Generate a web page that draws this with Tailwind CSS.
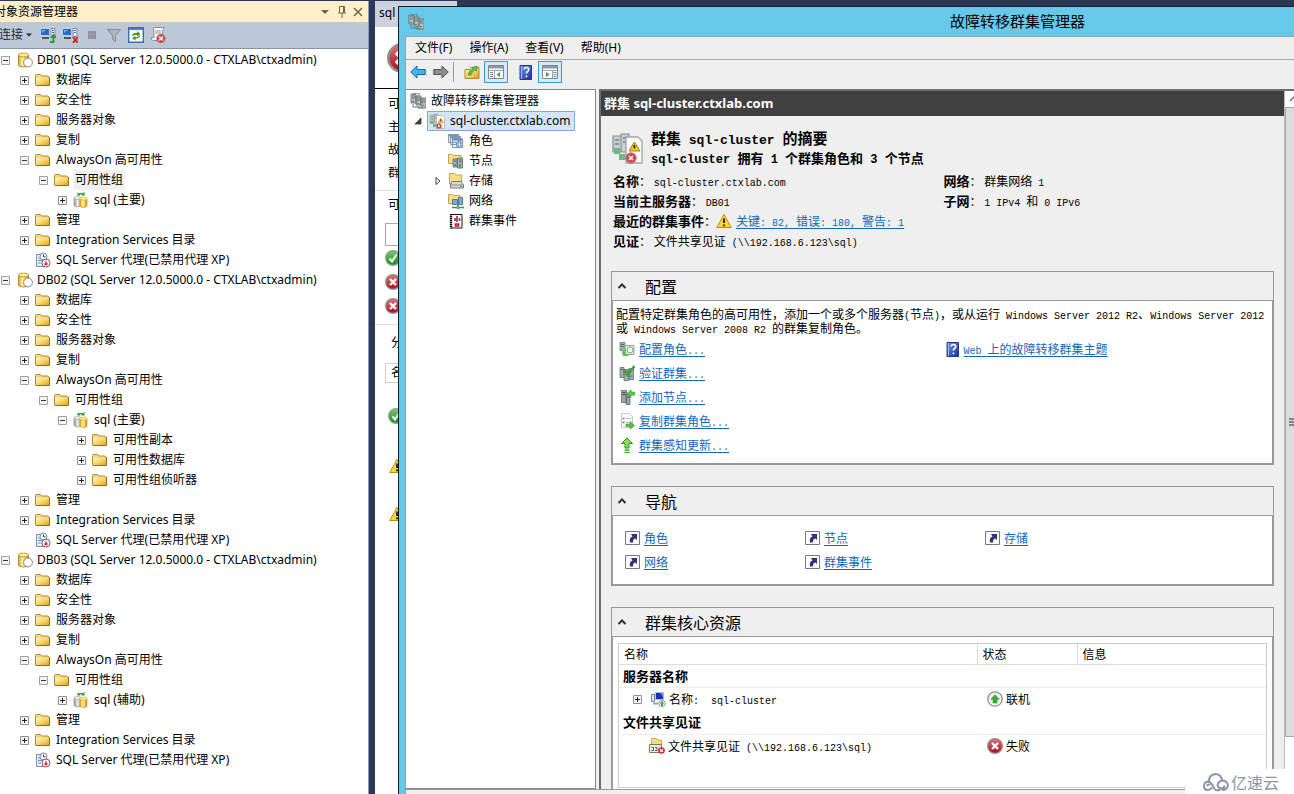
<!DOCTYPE html>
<html lang="zh-CN">
<head>
<meta charset="utf-8">
<title>故障转移群集管理器</title>
<script src="https://cdn.jsdelivr.net/npm/@tailwindcss/browser@4"></script>
</head>
<body class="h-screen overflow-hidden bg-[#293955] font-['Noto_Sans','Noto_Sans_CJK_SC',sans-serif] text-xs text-black">

<svg class="absolute h-0 w-0" aria-hidden="true">
  <defs>
    <linearGradient id="gold" x1="0" y1="0" x2="1" y2="1"><stop offset="0" stop-color="#fff6c4"/><stop offset=".5" stop-color="#f6d567"/><stop offset="1" stop-color="#dc9c1c"/></linearGradient>
    <linearGradient id="cyl" x1="0" x2="1"><stop offset="0" stop-color="#d9a520"/><stop offset=".4" stop-color="#fff3a8"/><stop offset="1" stop-color="#d08c10"/></linearGradient>
    <linearGradient id="greyCyl" x1="0" x2="1"><stop offset="0" stop-color="#8d8d8d"/><stop offset=".5" stop-color="#eee"/><stop offset="1" stop-color="#999"/></linearGradient>
    <linearGradient id="red" x1="0" y1="0" x2="0" y2="1"><stop offset="0" stop-color="#e8707a"/><stop offset="1" stop-color="#a80c18"/></linearGradient>
    <linearGradient id="green" x1="0" y1="0" x2="0" y2="1"><stop offset="0" stop-color="#79cf6c"/><stop offset="1" stop-color="#16831a"/></linearGradient>
    <linearGradient id="blue" x1="0" y1="0" x2="1" y2="1"><stop offset="0" stop-color="#6f93ea"/><stop offset="1" stop-color="#1b2fa0"/></linearGradient>
    <symbol id="plus" viewBox="0 0 9 9"><path d="M.5.5h8v8h-8z" fill="#f4f4f4" stroke="#919191"/><path d="M2 4.500h5M4.500 2v5" stroke="#222"/></symbol>
    <symbol id="minus" viewBox="0 0 9 9"><path d="M.5.5h8v8h-8z" fill="#f4f4f4" stroke="#a0a0a0"/><path d="M2 4.500h5" stroke="#334"/></symbol>
    <symbol id="folder" viewBox="0 0 16 16"><path d="M.5 13V3.500q0-1 1-1h4l1.500 1.500h5.500q1 0 1 1V13z" fill="#f3d77a" stroke="#b08a35"/><path d="M1 13.500V5.500h13.500V13.500z" fill="url(#gold)"/><path d="M1 13.500h13.500V5" fill="none" stroke="#96700f"/></symbol>
    <symbol id="db" viewBox="0 0 16 16"><path d="M1.500 3v10q0 2 5 2t5-2V3z" fill="url(#cyl)" stroke="#a77a18" stroke-width=".8"/><ellipse cx="6.500" cy="3" rx="5" ry="2" fill="#fff0a0" stroke="#b08420" stroke-width=".8"/><circle cx="11" cy="10.500" r="4.400" fill="#fff" stroke="#888"/></symbol>
    <symbol id="ag" viewBox="0 0 16 16"><path d="M1 6v7q0 2 3.500 2T8 13V6z" fill="url(#greyCyl)" stroke="#999" stroke-width=".7"/><ellipse cx="4.500" cy="6" rx="3.500" ry="1.500" fill="#eee" stroke="#999" stroke-width=".6"/><path d="M7 6.500v7q0 2 3.500 2t3.500-2v-7z" fill="url(#cyl)" stroke="#d79b17" stroke-width=".7"/><ellipse cx="10.500" cy="6.500" rx="3.500" ry="1.500" fill="#fff4a0" stroke="#d8a020" stroke-width=".6"/><path d="M5 3q3-3 6 0M11 .3V3H8.500M5 .8V3h2" fill="none" stroke="#2c9a38" stroke-width="1.200"/></symbol>
    <symbol id="agent" viewBox="0 0 16 16"><path d="M1.500 2.500h7v12h-7z" fill="#e8eef8" stroke="#7b8fb0"/><path d="M3 6h4M3 8.500h4M3 11h3" stroke="#6d8ec4"/><circle cx="8.500" cy="4.500" r="3.500" fill="#fff" stroke="#6a86b0"/><path d="M8.500 2.500v2.300h2" fill="none" stroke="#333"/><circle cx="11" cy="11" r="4" fill="#fff" stroke="#a5485c"/><path d="M11 9v4M9.500 11.500L11 13l1.500-1.500" fill="none" stroke="#c02030" stroke-width="1.200"/></symbol>
    <symbol id="conn" viewBox="0 0 16 16"><path d="M.5 1.500h9v7h-9z" fill="#2467d6" stroke="#c5d4ee"/><path d="M2 3h4L2 6z" fill="#6fa8f5"/><path d="M2 11h7" stroke="#555" stroke-width="2"/><path d="M11 1.500h4v8h-4z" fill="#e9eef5" stroke="#8090a5"/><path d="M12 3.500h2M12 5.500h2" stroke="#667"/></symbol>
    <symbol id="srv" viewBox="0 0 16 16"><path d="M1 1h5v9H1zM6 3h5v9H6zM11 5h5v10h-5z" fill="#b9bfc2" stroke="#5d6468" stroke-width=".8"/><path d="M2 3h3M2 5h3M7 5h3M7 7h3M12 7h3M12 9h3" stroke="#566" stroke-width=".9"/><path d="M4 0h5M4 0v2M9 0v3M3 11v3h7M8 13v2h5" stroke="#777" fill="none"/><path d="M2 8h2v1H2zM7 10h2v1H7zM12 12h2v1h-2z" fill="#3f9d56"/></symbol>
    <symbol id="warn" viewBox="0 0 16 16"><path d="M8 1.500L15.300 14.500H.7z" fill="#fbd62e" stroke="#b98e17" stroke-linejoin="round"/><path d="M8 5.500v4.500M8 11.500v1.700" stroke="#2b2300" stroke-width="1.900"/></symbol>
    <symbol id="err" viewBox="0 0 16 16"><circle cx="8" cy="8" r="7.300" fill="url(#red)" stroke="#8f8f8f" stroke-width="1.400"/><path d="M5 5l6 6M11 5l-6 6" stroke="#fff" stroke-width="2.400"/></symbol>
    <symbol id="ok" viewBox="0 0 16 16"><circle cx="8" cy="8" r="7.300" fill="url(#green)" stroke="#8f9f8f" stroke-width="1.400"/><path d="M4.500 8.500l2.500 3 4.500-7" fill="none" stroke="#fff" stroke-width="2"/></symbol>
    <symbol id="cluster" viewBox="0 0 16 16"><path d="M1 2h4v8H1zM5 1h4v9H5z" fill="#c9ced0" stroke="#8a9195" stroke-width=".6"/><path d="M2 4h2M6 3h2M2 6h2M6 5h2" stroke="#788" stroke-width=".8"/><path d="M1.500 8h3v3h-3zM4 11h3v3H4z" fill="#6fb585"/><path d="M7.500 2.500h6l2 2v11h-8z" fill="#fff" stroke="#a5a5a5" stroke-width=".7"/><path d="M11.700 5l2.800 4.500H9z" fill="#f3cd22" stroke="#98811a" stroke-width=".5"/><path d="M11.700 6.500v1.700" stroke="#222" stroke-width=".9"/><circle cx="10" cy="13" r="2.600" fill="#d7414b" stroke="#b7808a" stroke-width=".6"/><path d="M9 12l2 2M11 12l-2 2" stroke="#fff" stroke-width=".8"/></symbol>
    <symbol id="roles" viewBox="0 0 16 16"><path d="M.5 1.500h10v8H.5zM2.500 3.500h10v8h-10zM4.500 5.500h10v9h-10z" fill="#edf2f8" stroke="#8596aa"/><path d="M1 2h9v1.500H1zM3 4h9v1.500H3zM5 6h9v1.800H5z" fill="#7195c2"/><circle cx="11.500" cy="11.500" r="3" fill="#b9d1ec" stroke="#5f87b8" stroke-width="1.300" stroke-dasharray="1.500 .8"/><circle cx="11.500" cy="11.500" r="1.200" fill="#fff" stroke="#5f87b8" stroke-width=".7"/></symbol>
    <symbol id="nodes" viewBox="0 0 16 16"><path d="M.5 1.500h4l1 1H13v8H.5z" fill="#f7df8e" stroke="#c9a747"/><path d="M5 6h4v8H5zM9.500 5h5v10h-5z" fill="#a9b6bb" stroke="#5c6e74" stroke-width=".9"/><path d="M6 8h2M11 7h2.500M11 9h2.500" stroke="#466"/><path d="M6 11h2v2H6zM11 11h2v3h-2z" fill="#35a45a"/></symbol>
    <symbol id="disk" viewBox="0 0 16 16"><path d="M1.500.5h5l1 1.500h6v9h-12z" fill="#f7df8e" stroke="#c9a747"/><path d="M4 8.500h9l2.500 3.500v3h-13v-3z" fill="#d8dadd" stroke="#777"/><path d="M2.500 12h13" stroke="#888"/><path d="M12 13.500h2" stroke="#35a434"/></symbol>
    <symbol id="net" viewBox="0 0 16 16"><path d="M.5 1.500h4l1 1H12v8H.5z" fill="#f7df8e" stroke="#c9a747"/><path d="M4.500 6.500h5v5h-5zM10.500 4.500h4v7h-4z" fill="#78a9dd" stroke="#56738f"/><path d="M10 11v3M4 14.500h12" stroke="#3f8f5d" stroke-width="1.600"/><path d="M8.500 13h3v3h-3z" fill="#5cb477"/></symbol>
    <symbol id="events" viewBox="0 0 16 16"><path d="M3 1.500h11v13.500H3z" fill="#fff" stroke="#111"/><path d="M3 1v14.500" stroke="#111" stroke-width="2.400" stroke-dasharray="1 1"/><path d="M9 3v6M7.500 11h3v2h-3z" stroke="#c01a24" stroke-width="1.600" fill="none"/><path d="M6 5h2v3H6zM10.500 5h2v3h-2z" fill="#6c62a8"/></symbol>
    <symbol id="book" viewBox="0 0 16 16"><path d="M2 1.500h11.500v14H2z" fill="url(#blue)" stroke="#24358d"/><path d="M3.500 2v13" stroke="#a9bdf5"/><path d="M6.300 5.500q0-2 2.200-2t2.200 2q0 1.200-1.200 2t-1 2.200M8.500 11.500v1.800" fill="none" stroke="#fff" stroke-width="1.600"/></symbol>
    <symbol id="pane" viewBox="0 0 16 16"><path d="M.5 1.500h15v13H.5z" fill="#fff" stroke="#7d8791"/><path d="M1 2h14v2.500H1z" fill="#8e99a5"/><path d="M1 6.500h14M6.500 6.500V14" stroke="#9aa4ae"/><path d="M2 8.500h3M2 10.500h3M2 12.500h3" stroke="#6d87a5"/><path d="M12 8v5L8.500 10.500z" fill="#3f9a3a"/></symbol>
    <symbol id="paneR" viewBox="0 0 16 16"><path d="M.5 1.500h15v13H.5z" fill="#fff" stroke="#7d8791"/><path d="M1 2h14v2.500H1z" fill="#8e99a5"/><path d="M1 6.500h14M10.500 6.500V14" stroke="#9aa4ae"/><path d="M11.500 8.500h3M11.500 10.500h3M11.500 12.500h3" stroke="#6d87a5"/><path d="M4 8v5l3.500-2.500z" fill="#3f9a3a"/></symbol>
    <symbol id="cfg" viewBox="0 0 16 16"><path d="M1 1.500h5v8H1z" fill="#a5b2ac" stroke="#6c7a74" stroke-width=".8"/><path d="M2 3.500h3M2 5.500h3" stroke="#566"/><path d="M6 4.500h9v9H6z" fill="#dfeee2" stroke="#93a39a"/><path d="M3 7.500h4v5H3z" fill="#6ec968"/><circle cx="11" cy="9" r="3" fill="#eef6ee" stroke="#8aa58f"/><path d="M3 9.500l7 5.500H4z" fill="#58bd4d"/></symbol>
    <symbol id="validate" viewBox="0 0 16 16"><path d="M1 2.500h4v10H1zM5 4.500h5v11H5zM10 3.500h4.500v11H10z" fill="#a6adb0" stroke="#687175" stroke-width=".8"/><path d="M2 4.500h2M6 6.500h3M6 8.500h3M11 11h2.500" stroke="#566"/><path d="M5 5l3.500 5L15.500 1" fill="none" stroke="#3aa23a" stroke-width="2.600"/></symbol>
    <symbol id="addnode" viewBox="0 0 16 16"><path d="M2.500 1.500h5v12h-5zM7 5.500h4v10H7z" fill="#9fa6a8" stroke="#60696c" stroke-width=".8"/><path d="M3.500 3.500h3M3.500 5.500h3M8 8h2" stroke="#444"/><path d="M8 4.500L12 .8v2.300h3.500v3H12v2.300z" fill="#5fcb45" stroke="#329a2c" stroke-width=".7"/></symbol>
    <symbol id="copy" viewBox="0 0 16 16"><path d="M2.500.5h8l3 3v11h-11z" fill="#fbfbfb" stroke="#c5c9cc"/><path d="M3.500 5.500h2M3.500 9.500h2" stroke="#5683b5" stroke-width="1.500"/><path d="M7 5.500h5M7 9.500h3" stroke="#b5bcc2"/><path d="M7 11h4V8.500l4.500 4-4.500 3.500v-2.500H7z" fill="#55c044" stroke="#3a9b31" stroke-width=".6"/></symbol>
    <symbol id="up" viewBox="0 0 16 16"><path d="M8 1l5.500 5.500H10V11H6V6.500H2.500z" fill="#8ade55" stroke="#2f9122"/><path d="M5.500 13h5M5.500 15.300h5" stroke="#46a62c" stroke-width="1.300"/></symbol>
    <symbol id="shortcut" viewBox="0 0 16 16"><path d="M.5 1.500h14v13H.5z" fill="#fcfcff" stroke="#77787f"/><path d="M5 12.500q-1-5 2.500-6L6 4h6v6l-1.700-1.500q-2.500.5-2.300 4z" fill="#33307e"/></symbol>
    <symbol id="pc" viewBox="0 0 16 16"><path d="M1.500 3.500h3v7h-3z" fill="#dde3ea" stroke="#7c8691"/><path d="M5.500 1.500h8v7h-8z" fill="#1732b5" stroke="#b5bdc8"/><path d="M10 2h3v4z" fill="#5d86f0"/><path d="M3 12.500h8" stroke="#9aa3ab" stroke-width="2"/><circle cx="12" cy="12.500" r="3.300" fill="#eef3ee" stroke="#9aa"/><path d="M12 10l2.300 2.500H13V15h-2v-2.500H9.700z" fill="#39ad39"/></symbol>
    <symbol id="share" viewBox="0 0 16 16"><path d="M2.500.5h5l1 1.500h4v7h-10z" fill="#f8df74" stroke="#d3ae3c"/><path d="M.5 6.500h12v8H.5z" fill="#e8ecd8" stroke="#7a7d5c"/><path d="M2.500 9.500h2v3h-2M6 9.500h2v3H6" stroke="#3f6a74" fill="none"/><circle cx="12.500" cy="12.500" r="3.300" fill="#d0202c"/><path d="M11 11l3 3M14 11l-3 3" stroke="#fff" stroke-width="1.200"/></symbol>
    <symbol id="online" viewBox="0 0 16 16"><circle cx="8" cy="8" r="7.200" fill="#f1f3f1" stroke="#8d9190" stroke-width="1.300"/><path d="M8 3.800l4.300 4.400H10V12H6V8.200H3.700z" fill="#3aac35" stroke="#268023" stroke-width=".5"/></symbol>
    <symbol id="chev" viewBox="0 0 10 8"><path d="M1.500 6L5 2.500 8.500 6" fill="none" stroke="#333" stroke-width="2"/></symbol>
  </defs>
</svg>

<div class="flex h-full">

  <!-- Object explorer -->
  <aside class="mt-px flex w-[369px] shrink-0 flex-col overflow-hidden border-r border-[#8e9bbc] bg-white">
    <header class="flex h-[21px] shrink-0 items-center bg-[#fff0cb] pr-0.5">
      <h2 class="-ml-1.5 flex-1 whitespace-nowrap">对象资源管理器</h2>
      <button aria-label="菜单" class="flex w-4 justify-center"><svg class="h-2 w-2" viewBox="0 0 8 8"><path d="M0 2h8L4 6z" fill="#75633d"/></svg></button>
      <button aria-label="固定" class="flex w-[17px] justify-center"><svg class="h-3 w-3" viewBox="0 0 12 12"><path d="M3.500 6.500v-6h5v6M2 7h8M6 7v5M7.500 1v6" fill="none" stroke="#75633d"/></svg></button>
      <button aria-label="关闭" class="flex w-4 justify-center"><svg class="h-2.5 w-2.5" viewBox="0 0 10 10"><path d="M1 1l8 8M9 1l-8 8" stroke="#75633d" stroke-width="1.500"/></svg></button>
    </header>
    <div class="flex h-[27px] shrink-0 items-center gap-[6px] border-b border-[#8a94a6] bg-[#bcc7d8] text-[#1b293e]">
      <button class="-ml-px flex items-center gap-[3px] whitespace-nowrap">连接<svg class="h-1.5 w-1.5" viewBox="0 0 6 6"><path d="M0 1.500h6L3 4.500z" fill="#1b293e"/></svg></button>
      <button aria-label="连接对象资源管理器" class="ml-0.5"><svg class="h-4 w-4" viewBox="0 0 16 16"><use href="#conn"/><path d="M10 15h3.500V9M11 11l2.500-3 2.500 3" fill="none" stroke="#2c9628" stroke-width="1.800"/></svg></button>
      <button aria-label="断开连接"><svg class="h-4 w-4" viewBox="0 0 16 16"><use href="#conn"/><path d="M11 10l5 6M16 10l-5 6" stroke="#d8242a" stroke-width="2"/></svg></button>
      <button aria-label="停止"><svg class="h-4 w-4" viewBox="0 0 16 16"><path d="M4 4h8v8H4z" fill="#8b8f99"/><path d="M6 4v8M9 4v8M4 7h8" stroke="#9da2ad"/></svg></button>
      <button aria-label="筛选器"><svg class="h-4 w-4" viewBox="0 0 16 16"><path d="M1.500 2.500h13l-5 6v6l-3-2V8.500z" fill="#aeb3bc" stroke="#868b95"/></svg></button>
      <button aria-label="刷新"><svg class="h-4 w-4" viewBox="0 0 16 16"><path d="M.7.700h14.600v14.600H.7z" fill="#fff" stroke="#326fb4" stroke-width="1.400"/><path d="M1 1h14v2H1z" fill="#3d7fc8"/><path d="M4 9q0-3 4-3h1V4l3.500 3L9 9.500V8H7L4 9zM12 8.500q0 3-4 3H7.500v2L4 11l3.500-2v1.300H9z" fill="#48951f"/></svg></button>
      <button aria-label="活动监视器"><svg class="h-4 w-4" viewBox="0 0 16 16"><path d="M3.500.5h11l-2 3v10h-9q-3 0-2.500-3h3z" fill="#f6f6f8" stroke="#888e9a"/><path d="M5 4h6M5 6h6" stroke="#99a"/><circle cx="11" cy="11.500" r="4.200" fill="#d9444b" stroke="#aa5b60" stroke-width=".7"/><path d="M9 9.500l4 4M13 9.500l-4 4" stroke="#fff" stroke-width="1.400"/></svg></button>
    </div>

    <ul class="mt-px whitespace-nowrap leading-5">
      <li>
        <div class="flex h-5 items-center pl-px"><button aria-label="折叠" class="mr-[7px]"><svg class="h-[9px] w-[9px]"><use href="#minus"/></svg></button><svg class="mr-1 h-4 w-4"><use href="#db"/></svg>DB01 (SQL Server 12.0.5000.0 - CTXLAB\ctxadmin)</div>
        <ul class="pl-5">
          <li class="flex h-5 items-center"><button aria-label="展开" class="mr-1.5"><svg class="h-[9px] w-[9px]"><use href="#plus"/></svg></button><svg class="mr-[5px] h-4 w-4"><use href="#folder"/></svg>数据库</li>
          <li class="flex h-5 items-center"><button aria-label="展开" class="mr-1.5"><svg class="h-[9px] w-[9px]"><use href="#plus"/></svg></button><svg class="mr-[5px] h-4 w-4"><use href="#folder"/></svg>安全性</li>
          <li class="flex h-5 items-center"><button aria-label="展开" class="mr-1.5"><svg class="h-[9px] w-[9px]"><use href="#plus"/></svg></button><svg class="mr-[5px] h-4 w-4"><use href="#folder"/></svg>服务器对象</li>
          <li class="flex h-5 items-center"><button aria-label="展开" class="mr-1.5"><svg class="h-[9px] w-[9px]"><use href="#plus"/></svg></button><svg class="mr-[5px] h-4 w-4"><use href="#folder"/></svg>复制</li>
          <li>
            <div class="flex h-5 items-center"><button aria-label="折叠" class="mr-1.5"><svg class="h-[9px] w-[9px]"><use href="#minus"/></svg></button><svg class="mr-[5px] h-4 w-4"><use href="#folder"/></svg>AlwaysOn 高可用性</div>
            <ul class="pl-[19px]">
              <li>
                <div class="flex h-5 items-center"><button aria-label="折叠" class="mr-1.5"><svg class="h-[9px] w-[9px]"><use href="#minus"/></svg></button><svg class="mr-[3px] h-4 w-4"><use href="#folder"/></svg><span class="bg-[#f0f0f0] px-0.5">可用性组</span></div>
                <ul class="pl-[19px]">
                  <li class="flex h-5 items-center"><button aria-label="展开" class="mr-1.5"><svg class="h-[9px] w-[9px]"><use href="#plus"/></svg></button><svg class="mr-[5px] h-4 w-4"><use href="#ag"/></svg>sql (主要)</li>
                </ul>
              </li>
            </ul>
          </li>
          <li class="flex h-5 items-center"><button aria-label="展开" class="mr-1.5"><svg class="h-[9px] w-[9px]"><use href="#plus"/></svg></button><svg class="mr-[5px] h-4 w-4"><use href="#folder"/></svg>管理</li>
          <li class="flex h-5 items-center"><button aria-label="展开" class="mr-1.5"><svg class="h-[9px] w-[9px]"><use href="#plus"/></svg></button><svg class="mr-[5px] h-4 w-4"><use href="#folder"/></svg>Integration Services 目录</li>
          <li class="flex h-5 items-center pl-[15px]"><svg class="mr-[5px] h-4 w-4"><use href="#agent"/></svg>SQL Server 代理(已禁用代理 XP)</li>
        </ul>
      </li>
      <li>
        <div class="flex h-5 items-center pl-px"><button aria-label="折叠" class="mr-[7px]"><svg class="h-[9px] w-[9px]"><use href="#minus"/></svg></button><svg class="mr-1 h-4 w-4"><use href="#db"/></svg>DB02 (SQL Server 12.0.5000.0 - CTXLAB\ctxadmin)</div>
        <ul class="pl-5">
          <li class="flex h-5 items-center"><button aria-label="展开" class="mr-1.5"><svg class="h-[9px] w-[9px]"><use href="#plus"/></svg></button><svg class="mr-[5px] h-4 w-4"><use href="#folder"/></svg>数据库</li>
          <li class="flex h-5 items-center"><button aria-label="展开" class="mr-1.5"><svg class="h-[9px] w-[9px]"><use href="#plus"/></svg></button><svg class="mr-[5px] h-4 w-4"><use href="#folder"/></svg>安全性</li>
          <li class="flex h-5 items-center"><button aria-label="展开" class="mr-1.5"><svg class="h-[9px] w-[9px]"><use href="#plus"/></svg></button><svg class="mr-[5px] h-4 w-4"><use href="#folder"/></svg>服务器对象</li>
          <li class="flex h-5 items-center"><button aria-label="展开" class="mr-1.5"><svg class="h-[9px] w-[9px]"><use href="#plus"/></svg></button><svg class="mr-[5px] h-4 w-4"><use href="#folder"/></svg>复制</li>
          <li>
            <div class="flex h-5 items-center"><button aria-label="折叠" class="mr-1.5"><svg class="h-[9px] w-[9px]"><use href="#minus"/></svg></button><svg class="mr-[5px] h-4 w-4"><use href="#folder"/></svg>AlwaysOn 高可用性</div>
            <ul class="pl-[19px]">
              <li>
                <div class="flex h-5 items-center"><button aria-label="折叠" class="mr-1.5"><svg class="h-[9px] w-[9px]"><use href="#minus"/></svg></button><svg class="mr-[5px] h-4 w-4"><use href="#folder"/></svg>可用性组</div>
                <ul class="pl-[19px]">
                  <li>
                    <div class="flex h-5 items-center"><button aria-label="折叠" class="mr-1.5"><svg class="h-[9px] w-[9px]"><use href="#minus"/></svg></button><svg class="mr-[5px] h-4 w-4"><use href="#ag"/></svg>sql (主要)</div>
                    <ul class="pl-[19px]">
                      <li class="flex h-5 items-center"><button aria-label="展开" class="mr-1.5"><svg class="h-[9px] w-[9px]"><use href="#plus"/></svg></button><svg class="mr-[5px] h-4 w-4"><use href="#folder"/></svg>可用性副本</li>
                      <li class="flex h-5 items-center"><button aria-label="展开" class="mr-1.5"><svg class="h-[9px] w-[9px]"><use href="#plus"/></svg></button><svg class="mr-[5px] h-4 w-4"><use href="#folder"/></svg>可用性数据库</li>
                      <li class="flex h-5 items-center"><button aria-label="展开" class="mr-1.5"><svg class="h-[9px] w-[9px]"><use href="#plus"/></svg></button><svg class="mr-[5px] h-4 w-4"><use href="#folder"/></svg>可用性组侦听器</li>
                    </ul>
                  </li>
                </ul>
              </li>
            </ul>
          </li>
          <li class="flex h-5 items-center"><button aria-label="展开" class="mr-1.5"><svg class="h-[9px] w-[9px]"><use href="#plus"/></svg></button><svg class="mr-[5px] h-4 w-4"><use href="#folder"/></svg>管理</li>
          <li class="flex h-5 items-center"><button aria-label="展开" class="mr-1.5"><svg class="h-[9px] w-[9px]"><use href="#plus"/></svg></button><svg class="mr-[5px] h-4 w-4"><use href="#folder"/></svg>Integration Services 目录</li>
          <li class="flex h-5 items-center pl-[15px]"><svg class="mr-[5px] h-4 w-4"><use href="#agent"/></svg>SQL Server 代理(已禁用代理 XP)</li>
        </ul>
      </li>
      <li>
        <div class="flex h-5 items-center pl-px"><button aria-label="折叠" class="mr-[7px]"><svg class="h-[9px] w-[9px]"><use href="#minus"/></svg></button><svg class="mr-1 h-4 w-4"><use href="#db"/></svg>DB03 (SQL Server 12.0.5000.0 - CTXLAB\ctxadmin)</div>
        <ul class="pl-5">
          <li class="flex h-5 items-center"><button aria-label="展开" class="mr-1.5"><svg class="h-[9px] w-[9px]"><use href="#plus"/></svg></button><svg class="mr-[5px] h-4 w-4"><use href="#folder"/></svg>数据库</li>
          <li class="flex h-5 items-center"><button aria-label="展开" class="mr-1.5"><svg class="h-[9px] w-[9px]"><use href="#plus"/></svg></button><svg class="mr-[5px] h-4 w-4"><use href="#folder"/></svg>安全性</li>
          <li class="flex h-5 items-center"><button aria-label="展开" class="mr-1.5"><svg class="h-[9px] w-[9px]"><use href="#plus"/></svg></button><svg class="mr-[5px] h-4 w-4"><use href="#folder"/></svg>服务器对象</li>
          <li class="flex h-5 items-center"><button aria-label="展开" class="mr-1.5"><svg class="h-[9px] w-[9px]"><use href="#plus"/></svg></button><svg class="mr-[5px] h-4 w-4"><use href="#folder"/></svg>复制</li>
          <li>
            <div class="flex h-5 items-center"><button aria-label="折叠" class="mr-1.5"><svg class="h-[9px] w-[9px]"><use href="#minus"/></svg></button><svg class="mr-[5px] h-4 w-4"><use href="#folder"/></svg>AlwaysOn 高可用性</div>
            <ul class="pl-[19px]">
              <li>
                <div class="flex h-5 items-center"><button aria-label="折叠" class="mr-1.5"><svg class="h-[9px] w-[9px]"><use href="#minus"/></svg></button><svg class="mr-[5px] h-4 w-4"><use href="#folder"/></svg>可用性组</div>
                <ul class="pl-[19px]">
                  <li class="flex h-5 items-center"><button aria-label="展开" class="mr-1.5"><svg class="h-[9px] w-[9px]"><use href="#plus"/></svg></button><svg class="mr-[5px] h-4 w-4"><use href="#ag"/></svg>sql (辅助)</li>
                </ul>
              </li>
            </ul>
          </li>
          <li class="flex h-5 items-center"><button aria-label="展开" class="mr-1.5"><svg class="h-[9px] w-[9px]"><use href="#plus"/></svg></button><svg class="mr-[5px] h-4 w-4"><use href="#folder"/></svg>管理</li>
          <li class="flex h-5 items-center"><button aria-label="展开" class="mr-1.5"><svg class="h-[9px] w-[9px]"><use href="#plus"/></svg></button><svg class="mr-[5px] h-4 w-4"><use href="#folder"/></svg>Integration Services 目录</li>
          <li class="flex h-5 items-center pl-[15px]"><svg class="mr-[5px] h-4 w-4"><use href="#agent"/></svg>SQL Server 代理(已禁用代理 XP)</li>
        </ul>
      </li>
    </ul>
  </aside>

  <!-- Desktop area: dashboard document with the cluster manager window over it -->
  <div class="relative min-w-0 flex-1 overflow-hidden pl-1.5">
    <section class="flex h-full flex-col pt-px">
      <div class="h-[26px] w-[82px] shrink-0 bg-[#cdd1dd] pl-1 leading-6">sql</div>
      <div class="flex-1 bg-white">
        <div class="flex h-[62px] items-center border-b border-black pl-3"><svg class="h-[30px] w-[30px]"><use href="#err"/></svg></div>
        <div class="border-b border-[#ddd] pt-[3px] pb-1.5 pl-[13px] leading-[23px]"><p>可</p><p>主</p><p>故</p><p>群</p></div>
        <div class="border-b border-[#ddd] pb-1.5 pl-2.5">
          <p class="h-7 pl-[3px] leading-7">可</p>
          <div class="mt-1 h-[23px] border border-[#aaa]"></div>
          <div class="flex h-6 items-center"><svg class="h-4 w-4"><use href="#ok"/></svg></div>
          <div class="flex h-6 items-center"><svg class="h-4 w-4"><use href="#err"/></svg></div>
          <div class="flex h-6 items-center"><svg class="h-4 w-4"><use href="#err"/></svg></div>
        </div>
        <div class="pl-2.5">
          <p class="h-9 pl-1.5 leading-9">分</p>
          <div class="mt-0.5 h-5 border border-[#ccc] pl-[5px] leading-[18px]">名</div>
          <div class="flex h-[66px] items-center pl-[3px]"><svg class="h-4 w-4"><use href="#ok"/></svg></div>
          <div class="flex h-[34px] items-center pl-1"><svg class="h-4 w-4"><use href="#warn"/></svg></div>
          <div class="flex h-[62px] items-center pl-1"><svg class="h-4 w-4"><use href="#warn"/></svg></div>
        </div>
      </div>
    </section>

    <main class="absolute top-1.5 right-0 bottom-0 left-[29px] flex flex-col border-t border-l border-[#10202c] bg-[#66c9ea] pl-1.5">
      <header class="flex h-[29px] shrink-0 items-center pl-[3px]">
        <svg class="h-4 w-4"><use href="#srv"/></svg>
        <h1 class="mr-[209px] ml-auto text-[15px] leading-none">故障转移群集管理器</h1>
      </header>
      <div class="flex min-h-0 flex-1 flex-col border-t border-l border-[#8aa4ae] bg-[#efefef]">
        <nav class="flex h-[23px] shrink-0 items-center gap-[17px] border-b border-[#aaa] pl-[9px]">
          <button>文件(F)</button><button>操作(A)</button><button>查看(V)</button><button>帮助(H)</button>
        </nav>
        <div class="flex h-[29px] shrink-0 items-center pb-1.5 pl-1">
          <button aria-label="后退" class="mr-[7px]"><svg class="h-4 w-4" viewBox="0 0 16 16"><path d="M.7 8L7 2v3.500h8.300v5H7V14z" fill="#45b2ef" stroke="#1668b0"/></svg></button>
          <button aria-label="前进" class="mr-1"><svg class="h-4 w-4" viewBox="0 0 16 16"><path d="M15.300 8L9 2v3.500H.7v5H9V14z" fill="#8d8d8d" stroke="#555"/></svg></button>
          <span class="mr-2.5 h-5 w-px bg-[#999]"></span>
          <button aria-label="上移" class="mr-1"><svg class="h-4 w-4" viewBox="0 0 16 16"><path d="M1 14.500v-9h5l1-2h8v11z" fill="url(#gold)" stroke="#b08a35"/><path d="M4 11q1-5 5-6L8 3.500 13 2l-.5 5-1.500-1q-3 1-4 5z" fill="#61c33e" stroke="#3a8f26" stroke-width=".7"/></svg></button>
          <button aria-label="显示控制台树" class="mr-2.5 flex h-[22px] w-6 items-center justify-center border border-[#3b9be0] bg-[#d5eaf8]"><svg class="h-4 w-4"><use href="#pane"/></svg></button>
          <button aria-label="帮助" class="mr-1"><svg class="h-4 w-4"><use href="#book"/></svg></button>
          <button aria-label="显示操作窗格" class="flex h-[22px] w-6 items-center justify-center border border-[#3b9be0] bg-[#d5eaf8]"><svg class="h-4 w-4"><use href="#paneR"/></svg></button>
        </div>

        <div class="mb-1 flex min-h-0 flex-1 border-b border-[#999]">
          <!-- Console tree -->
          <div class="w-[190px] shrink-0 border border-l-0 border-[#828790] bg-white pt-px whitespace-nowrap">
            <div class="flex h-5 items-center pl-1"><svg class="mr-[5px] h-4 w-4"><use href="#srv"/></svg>故障转移群集管理器</div>
            <div class="flex h-5 items-center pl-2">
              <button aria-label="折叠" class="mr-[5px]"><svg class="h-2 w-2" viewBox="0 0 8 8"><path d="M7 1v6H1z" fill="#444" stroke="#222" stroke-width=".7"/></svg></button>
              <span class="flex h-5 items-center border border-[#84a8dc] bg-[#d5e5f9] pr-[3px] pl-px"><svg class="mr-[5px] h-4 w-4"><use href="#cluster"/></svg>sql-cluster.ctxlab.com</span>
            </div>
            <ul>
              <li class="flex h-5 items-center pl-[42px]"><svg class="mr-[5px] h-4 w-4"><use href="#roles"/></svg>角色</li>
              <li class="flex h-5 items-center pl-[42px]"><svg class="mr-[5px] h-4 w-4"><use href="#nodes"/></svg>节点</li>
              <li class="flex h-5 items-center pl-7"><button aria-label="展开" class="mr-1.5"><svg class="h-2 w-2" viewBox="0 0 8 8"><path d="M2 .5v7L6 4z" fill="#fff" stroke="#444"/></svg></button><svg class="mr-[5px] h-4 w-4"><use href="#disk"/></svg>存储</li>
              <li class="flex h-5 items-center pl-[42px]"><svg class="mr-[5px] h-4 w-4"><use href="#net"/></svg>网络</li>
              <li class="flex h-5 items-center pl-[42px]"><svg class="mr-[5px] h-4 w-4"><use href="#events"/></svg>群集事件</li>
            </ul>
          </div>

          <!-- Details -->
          <div class="ml-[3px] flex min-w-0 flex-1 border-t-2 border-l-2 border-[#6e6e6e] font-['Noto_Sans_CJK_SC',sans-serif] whitespace-nowrap">
            <div class="flex min-w-0 flex-1 flex-col">
              <h2 class="h-[25px] shrink-0 bg-[#404040] pl-[3px] font-['Noto_Sans','Noto_Sans_CJK_SC',sans-serif] text-[13px] leading-[25px] font-bold text-white">群集 sql-cluster.ctxlab.com</h2>
              <div class="flex shrink-0 items-center gap-2 pt-3 pl-2.5 font-bold">
                <svg class="h-8 w-8"><use href="#cluster"/></svg>
                <div>
                  <p class="h-5 text-[15px] leading-5">群集<span class="font-['Liberation_Mono'] text-[13px] leading-none"> sql-cluster </span>的摘要</p>
                  <p class="h-5 text-[13px] leading-5"><span class="font-['Liberation_Mono'] text-xs leading-none">sql-cluster </span>拥有<span class="font-['Liberation_Mono'] text-xs leading-none"> 1 </span>个群集角色和<span class="font-['Liberation_Mono'] text-xs leading-none"> 3 </span>个节点</p>
                </div>
              </div>
              <dl class="mt-[3px] grid shrink-0 auto-rows-[20px] grid-cols-2 pr-2.5 pl-3 leading-5">
                <div class="flex"><dt class="text-[13px] font-bold">名称</dt><dd>：&nbsp;<span class="font-['Liberation_Mono'] text-[10px] leading-none">sql-cluster.ctxlab.com</span></dd></div>
                <div class="flex"><dt class="text-[13px] font-bold">网络</dt><dd>：&nbsp;群集网络<span class="font-['Liberation_Mono'] text-[10px] leading-none"> 1</span></dd></div>
                <div class="flex"><dt class="text-[13px] font-bold">当前主服务器</dt><dd>：&nbsp;<span class="font-['Liberation_Mono'] text-[10px] leading-none">DB01</span></dd></div>
                <div class="flex"><dt class="text-[13px] font-bold">子网</dt><dd>：&nbsp;<span class="font-['Liberation_Mono'] text-[10px] leading-none">1 IPv4 </span>和<span class="font-['Liberation_Mono'] text-[10px] leading-none"> 0 IPv6</span></dd></div>
                <div class="col-span-2 flex"><dt class="text-[13px] font-bold">最近的群集事件</dt><dd class="flex h-5 items-center">：<svg class="mr-1 h-4 w-4"><use href="#warn"/></svg><a href="#events-list" class="text-[#1266bd] underline underline-offset-2">关键<span class="font-['Liberation_Mono'] text-[10px] leading-none">: 82, </span>错误<span class="font-['Liberation_Mono'] text-[10px] leading-none">: 180, </span>警告<span class="font-['Liberation_Mono'] text-[10px] leading-none">: 1</span></a></dd></div>
                <div class="col-span-2 flex"><dt class="text-[13px] font-bold">见证</dt><dd>：&nbsp;文件共享见证<span class="font-['Liberation_Mono'] text-[10px] leading-none"> (\\192.168.6.123\sql)</span></dd></div>
              </dl>

              <section class="mx-2.5 mt-5 shrink-0 border border-[#999]">
                <h3 class="flex h-7 items-center gap-[18px] pl-[5px] text-base leading-none"><button aria-label="折叠配置"><svg class="h-2 w-2.5"><use href="#chev"/></svg></button>配置</h3>
                <div class="border border-[#999] bg-white px-[3px] pt-1.5 pb-1.5">
                  <p class="leading-[14px]"><span class="block h-[14px]">配置特定群集角色的高可用性，添加一个或多个服务器<span class="font-['Liberation_Mono'] text-[10px] leading-none">(</span>节点<span class="font-['Liberation_Mono'] text-[10px] leading-none">)</span>，或从运行<span class="font-['Liberation_Mono'] text-[10px] leading-none"> Windows Server 2012 R2</span>、<span class="font-['Liberation_Mono'] text-[10px] leading-none">Windows Server 2012</span></span>
                  <span class="block h-[14px]">或<span class="font-['Liberation_Mono'] text-[10px] leading-none"> Windows Server 2008 R2 </span>的群集复制角色。</span></p>
                  <div class="mt-0.5 grid grid-cols-2 text-[#1266bd] underline underline-offset-2">
                    <ul class="pl-[3px]">
                      <li class="flex h-6 items-center gap-1"><svg class="h-4 w-4"><use href="#cfg"/></svg><a href="#cfg-role">配置角色<span class="font-['Liberation_Mono'] text-[10px] leading-none">...</span></a></li>
                      <li class="flex h-6 items-center gap-1"><svg class="h-4 w-4"><use href="#validate"/></svg><a href="#validate-cluster">验证群集<span class="font-['Liberation_Mono'] text-[10px] leading-none">...</span></a></li>
                      <li class="flex h-6 items-center gap-1"><svg class="h-4 w-4"><use href="#addnode"/></svg><a href="#add-node">添加节点<span class="font-['Liberation_Mono'] text-[10px] leading-none">...</span></a></li>
                      <li class="flex h-6 items-center gap-1"><svg class="h-4 w-4"><use href="#copy"/></svg><a href="#copy-roles">复制群集角色<span class="font-['Liberation_Mono'] text-[10px] leading-none">...</span></a></li>
                      <li class="flex h-6 items-center gap-1"><svg class="h-4 w-4"><use href="#up"/></svg><a href="#update">群集感知更新<span class="font-['Liberation_Mono'] text-[10px] leading-none">...</span></a></li>
                    </ul>
                    <div class="flex h-6 items-center gap-[3px] pl-0.5"><svg class="h-4 w-4"><use href="#book"/></svg><a href="#web"><span class="font-['Liberation_Mono'] text-[10px] leading-none">Web </span>上的故障转移群集主题</a></div>
                  </div>
                </div>
              </section>

              <section class="mx-2.5 mt-[21px] shrink-0 border border-[#999]">
                <h3 class="flex h-7 items-center gap-[18px] pl-[5px] text-base leading-none"><button aria-label="折叠导航"><svg class="h-2 w-2.5"><use href="#chev"/></svg></button>导航</h3>
                <ul class="grid grid-cols-[180px_180px_180px] border border-[#999] bg-white py-2.5 pl-3 text-[#1266bd] underline underline-offset-2">
                  <li class="flex h-6 items-center gap-[3px]"><svg class="h-4 w-4"><use href="#shortcut"/></svg><a href="#nav-roles">角色</a></li>
                  <li class="flex h-6 items-center gap-[3px]"><svg class="h-4 w-4"><use href="#shortcut"/></svg><a href="#nav-nodes">节点</a></li>
                  <li class="flex h-6 items-center gap-[3px]"><svg class="h-4 w-4"><use href="#shortcut"/></svg><a href="#nav-storage">存储</a></li>
                  <li class="flex h-6 items-center gap-[3px]"><svg class="h-4 w-4"><use href="#shortcut"/></svg><a href="#nav-network">网络</a></li>
                  <li class="flex h-6 items-center gap-[3px]"><svg class="h-4 w-4"><use href="#shortcut"/></svg><a href="#nav-events">群集事件</a></li>
                </ul>
              </section>

              <section class="mx-2.5 mt-[21px] flex min-h-0 flex-1 flex-col border border-b-0 border-[#999]">
                <h3 class="flex h-7 shrink-0 items-center gap-[18px] pl-[5px] text-base leading-none"><button aria-label="折叠群集核心资源"><svg class="h-2 w-2.5"><use href="#chev"/></svg></button>群集核心资源</h3>
                <div class="min-h-0 flex-1 border border-b-0 border-[#999] bg-white px-[5px] pt-1.5 pb-px">
                  <div class="h-full overflow-hidden border border-[#ccc]">
                    <table class="w-full table-fixed text-left">
                      <colgroup><col><col class="w-[100px]"><col class="w-[189px]"></colgroup>
                      <thead><tr class="h-5 border-b border-[#ddd]"><th class="border-r border-[#ddd] pl-[5px] font-normal">名称</th><th class="border-r border-[#ddd] pl-[5px] font-normal">状态</th><th class="pl-[5px] font-normal">信息</th></tr></thead>
                      <tbody>
                        <tr class="h-[23px] border-b border-[#eee]"><th colspan="3" class="pl-1 text-[13px] leading-[18px]">服务器名称</th></tr>
                        <tr class="h-6"><td><span class="flex items-center pl-3.5"><button aria-label="展开" class="mr-2"><svg class="h-[9px] w-[9px]"><use href="#plus"/></svg></button><svg class="mr-[3px] h-4 w-4"><use href="#pc"/></svg><span>名称<span class="font-['Liberation_Mono'] text-[10px] leading-none">: &nbsp;sql-cluster</span></span></span></td><td><span class="flex items-center gap-[3px] pl-2.5"><svg class="h-4 w-4"><use href="#online"/></svg>联机</span></td><td></td></tr>
                        <tr class="h-[23px] border-b border-[#eee]"><th colspan="3" class="pl-1 text-[13px] leading-[18px]">文件共享见证</th></tr>
                        <tr class="h-6"><td><span class="flex items-center pl-[30px]"><svg class="mr-[3px] h-4 w-4"><use href="#share"/></svg><span>文件共享见证<span class="font-['Liberation_Mono'] text-[10px] leading-none"> (\\192.168.6.123\sql)</span></span></span></td><td><span class="flex items-center gap-[3px] pl-2.5"><svg class="h-4 w-4"><use href="#err"/></svg>失败</span></td><td></td></tr>
                      </tbody>
                    </table>
                  </div>
                </div>
              </section>
            </div>
            <!-- Scrollbar, cut by the screen edge -->
            <div class="flex w-2.5 shrink-0 flex-col overflow-hidden border-l border-[#bbb] bg-white">
              <svg class="h-4 w-4 shrink-0" viewBox="0 0 16 16"><path d="M5 10l4-4 4 4" fill="none" stroke="#777" stroke-width="1.500"/></svg>
              <div class="flex h-[630px] w-[18px] shrink-0 items-center border border-[#aaa] bg-[#dcdcdc] pl-[3px]"><svg class="h-2 w-2.5" viewBox="0 0 10 8"><path d="M0 1h10M0 4h10M0 7h10" stroke="#666" stroke-width="1.500"/></svg></div>
            </div>
          </div>
        </div>
      </div>
    </main>

    <!-- Watermark -->
    <div class="absolute right-0 bottom-0 flex h-[25px] w-[109px] items-center gap-0.5 bg-white pl-[18px] font-['Noto_Sans_CJK_SC',sans-serif] text-base leading-none text-[#8d94a3]">
      <svg class="h-5 w-[26px]" viewBox="0 0 26 20"><path d="M9 15.500q-2 3-5 2.500t-3-4 3.500-4.500q3 0 4.500 3t3 5q3 2 6-.5M6 9q0-6 6-7 6 0 7 6M19 18q5 0 6-4.500-1-5-6-5-4 1-4.500 5 1 3 4 3t3-3M4 14q1-2.500 3-1" fill="none" stroke="currentColor" stroke-width="2"/></svg>
      亿速云
    </div>
  </div>
</div>
</body>
</html>
